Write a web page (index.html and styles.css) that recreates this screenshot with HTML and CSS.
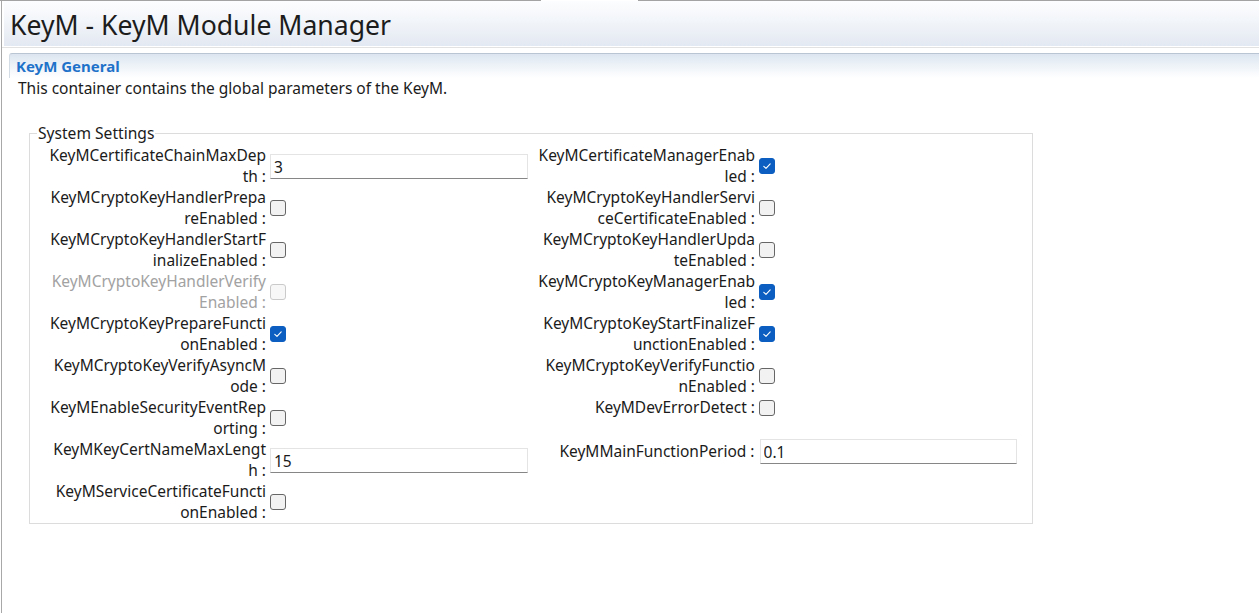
FILE: index.html
```html
<!DOCTYPE html>
<html>
<head>
<meta charset="utf-8">
<link rel="stylesheet" href="styles.css">
</head>
<body>
<div class="topline"><div class="seg seg-a"></div><div class="seg-gap"></div><div class="seg seg-b"></div></div>
<div class="frame">
  <div class="header"><h1 class="title">KeyM - KeyM Module Manager</h1></div>
  <div class="header-sep"></div>
  <div class="section-head"><span class="section-title">KeyM General</span></div>
  <p class="desc">This container contains the global parameters of the KeyM.</p>
  <fieldset class="group">
    <legend class="legend">System Settings</legend>
    <div class="grid">
      <div class="field field-l"><div class="lbl"><span>KeyMCertificateChainMaxDep</span><span>th :</span></div><input class="txt" type="text" value="3"></div>
      <div class="field field-r"><div class="lbl"><span>KeyMCertificateManagerEnab</span><span>led :</span></div><span class="cb on"><svg viewBox="0 0 16 16" width="16" height="16"><path d="M4.8 8.3 L7 10.4 L11.2 5.9" fill="none" stroke="#fff" stroke-width="1.1" stroke-linecap="round" stroke-linejoin="round"/></svg></span></div>

      <div class="field field-l"><div class="lbl"><span>KeyMCryptoKeyHandlerPrepa</span><span>reEnabled :</span></div><span class="cb"></span></div>
      <div class="field field-r"><div class="lbl"><span>KeyMCryptoKeyHandlerServi</span><span>ceCertificateEnabled :</span></div><span class="cb"></span></div>

      <div class="field field-l"><div class="lbl"><span>KeyMCryptoKeyHandlerStartF</span><span>inalizeEnabled :</span></div><span class="cb"></span></div>
      <div class="field field-r"><div class="lbl"><span>KeyMCryptoKeyHandlerUpda</span><span>teEnabled :</span></div><span class="cb"></span></div>

      <div class="field field-l"><div class="lbl disabled"><span>KeyMCryptoKeyHandlerVerify</span><span>Enabled :</span></div><span class="cb dis"></span></div>
      <div class="field field-r"><div class="lbl"><span>KeyMCryptoKeyManagerEnab</span><span>led :</span></div><span class="cb on"><svg viewBox="0 0 16 16" width="16" height="16"><path d="M4.8 8.3 L7 10.4 L11.2 5.9" fill="none" stroke="#fff" stroke-width="1.1" stroke-linecap="round" stroke-linejoin="round"/></svg></span></div>

      <div class="field field-l"><div class="lbl"><span>KeyMCryptoKeyPrepareFuncti</span><span>onEnabled :</span></div><span class="cb on"><svg viewBox="0 0 16 16" width="16" height="16"><path d="M4.8 8.3 L7 10.4 L11.2 5.9" fill="none" stroke="#fff" stroke-width="1.1" stroke-linecap="round" stroke-linejoin="round"/></svg></span></div>
      <div class="field field-r"><div class="lbl"><span>KeyMCryptoKeyStartFinalizeF</span><span>unctionEnabled :</span></div><span class="cb on"><svg viewBox="0 0 16 16" width="16" height="16"><path d="M4.8 8.3 L7 10.4 L11.2 5.9" fill="none" stroke="#fff" stroke-width="1.1" stroke-linecap="round" stroke-linejoin="round"/></svg></span></div>

      <div class="field field-l"><div class="lbl"><span>KeyMCryptoKeyVerifyAsyncM</span><span>ode :</span></div><span class="cb"></span></div>
      <div class="field field-r"><div class="lbl"><span>KeyMCryptoKeyVerifyFunctio</span><span>nEnabled :</span></div><span class="cb"></span></div>

      <div class="field field-l"><div class="lbl"><span>KeyMEnableSecurityEventRep</span><span>orting :</span></div><span class="cb"></span></div>
      <div class="field field-r"><div class="lbl"><span>KeyMDevErrorDetect :</span></div><span class="cb"></span></div>

      <div class="field field-l"><div class="lbl"><span>KeyMKeyCertNameMaxLengt</span><span>h :</span></div><input class="txt" type="text" value="15"></div>
      <div class="field field-r"><div class="lbl"><span>KeyMMainFunctionPeriod :</span></div><input class="txt txt-r" type="text" value="0.1"></div>

      <div class="field field-l"><div class="lbl"><span>KeyMServiceCertificateFuncti</span><span>onEnabled :</span></div><span class="cb"></span></div>
    </div>
  </fieldset>
</div>
</body>
</html>
```

FILE: styles.css
```css
html, body {
  margin: 0;
  padding: 0;
  background: #ffffff;
  height: 100%;
  overflow: hidden;
}
body {
  font-family: "Noto Sans", "Open Sans", sans-serif;
  color: #1b1b1b;
}
.topline {
  display: flex;
  height: 1px;
}
.seg {
  border-top: 1px solid #a3a3a3;
}
.seg-a { width: 541px; }
.seg-gap { width: 97px; }
.seg-b { flex: 1; }

.frame {
  margin-left: 1px;
  border-left: 1px solid #a8a8a8;
  height: 612px;
}
.header {
  margin-left: 2px;
  height: 45px;
  background: linear-gradient(to bottom, #fcfdfe 0%, #f3f6fa 40%, #e3e9f2 100%);
  display: flex;
  align-items: center;
}
.title {
  margin: 0;
  padding: 2px 0 0 6px;
  font-weight: normal;
  font-size: 26.6px;
  line-height: 30px;
  color: #1c1c1c;
}
.header-sep {
  height: 6px;
  border-top: 1px solid #ffffff;
  box-shadow: inset 0 1px 0 #e2e2e2;
}
.section-head {
  margin-left: 7px;
  height: 24px;
  border-top: 1px solid #bac5d3;
  border-left: 1px solid #d3dbe5;
  border-top-left-radius: 3px;
  background: linear-gradient(to bottom, #dce5f0 0%, #eef3f8 50%, #ffffff 100%);
  display: flex;
  align-items: center;
}
.section-title {
  padding-left: 6px;
  font-size: 15px;
  font-weight: bold;
  color: #1f72c9;
  line-height: 20px;
}
.desc {
  margin: 0;
  padding-left: 16px;
  font-size: 15.5px;
  line-height: 21px;
}
.group {
  margin: 24px 0 0 27px;
  width: 1004px;
  box-sizing: border-box;
  border: 1px solid #dcdcdc;
  padding: 1px 14px 0 7px;
}
.legend {
  padding: 0 1px;
  font-size: 15.6px;
  line-height: 21px;
}
.grid {
  display: grid;
  grid-template-columns: 491px 482px;
  column-gap: 7px;
  align-items: start;
}
.field {
  display: flex;
  align-items: center;
  gap: 4px;
}
.field-l .lbl { width: 229px; }
.field-r .lbl { width: 220px; }
.lbl {
  display: flex;
  flex-direction: column;
  align-items: flex-end;
  font-size: 15.5px;
  line-height: 21px;
  white-space: nowrap;
  color: #1b1b1b;
}
.lbl.disabled { color: #a2a2a2; }
.cb {
  width: 16px;
  height: 16px;
  box-sizing: border-box;
  border: 1px solid #666666;
  border-radius: 3px;
  background: #f2f2f2;
  flex: none;
  display: block;
  position: relative;
}
.cb svg {
  position: absolute;
  left: -1px;
  top: -1px;
}
.cb.on {
  background: #0c5fc0;
  border-color: #0c5fc0;
}
.cb.dis {
  border-color: #cacaca;
  background: #f7f7f7;
}
.txt {
  width: 258px;
  height: 25px;
  box-sizing: border-box;
  margin: 0;
  border: 1px solid #e4e4e4;
  border-bottom-color: #868686;
  border-radius: 0;
  padding: 1px 0 0 3px;
  font-family: "Noto Sans", "Open Sans", sans-serif;
  font-size: 15.5px;
  color: #1b1b1b;
  background: #ffffff;
  outline: none;
}
.txt-r { margin-left: 1px; }
```
